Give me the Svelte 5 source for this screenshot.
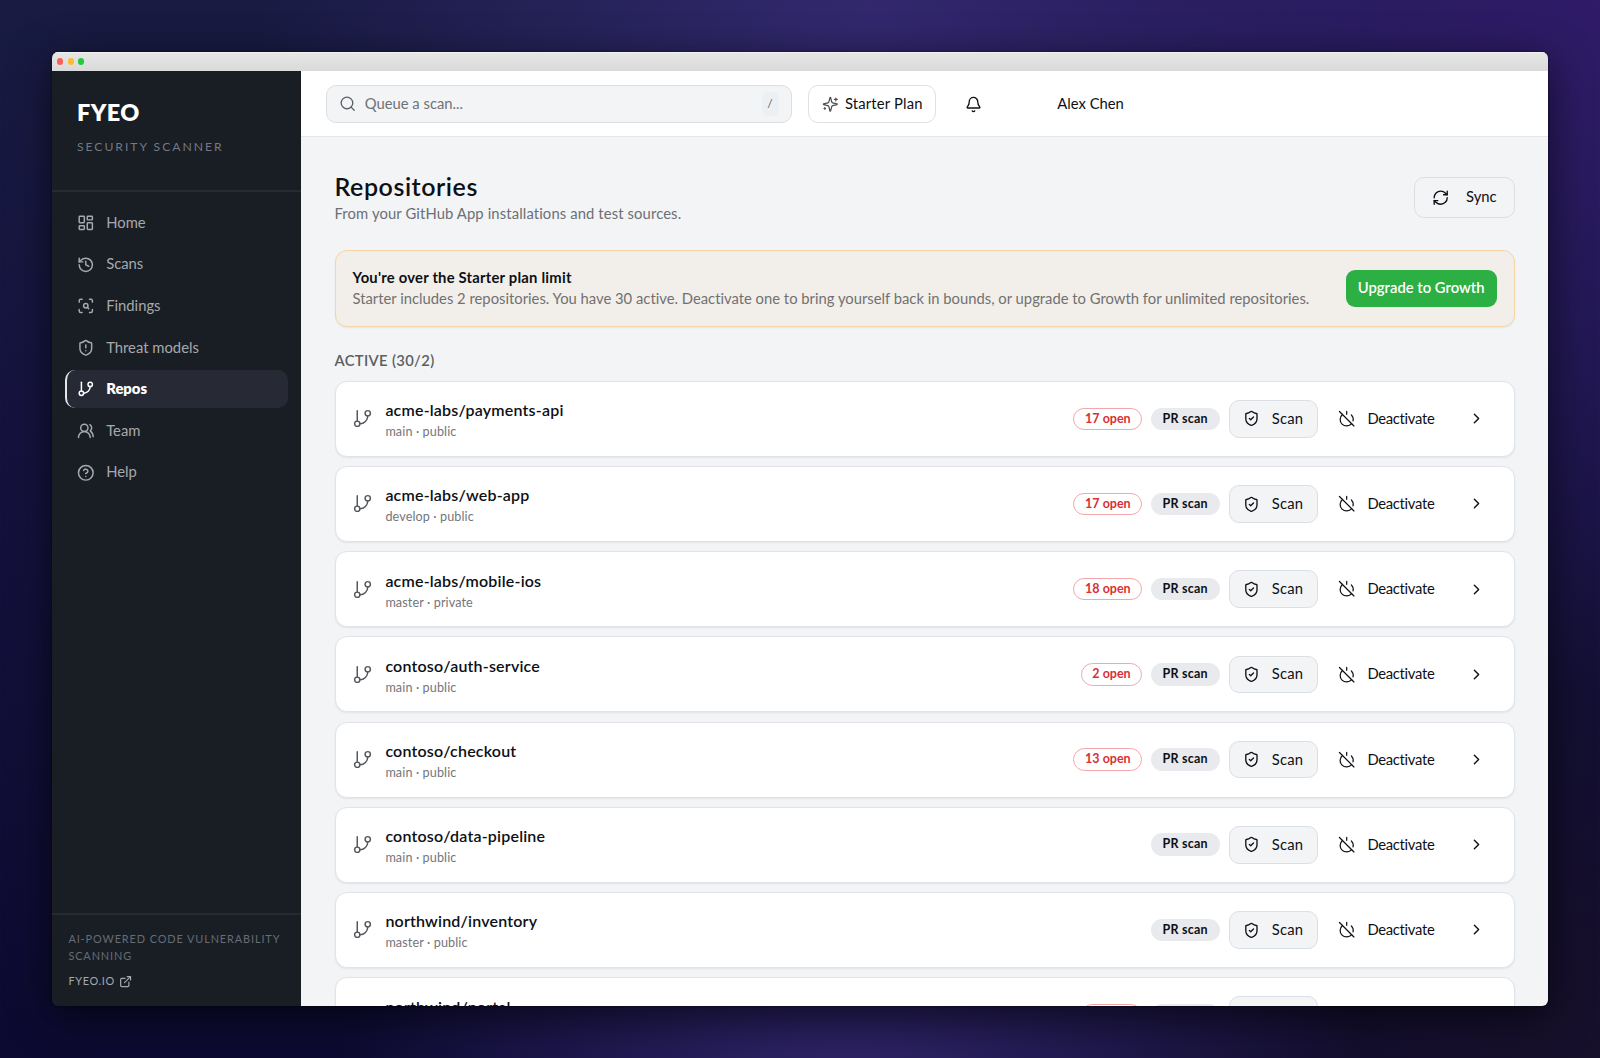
<script lang="ts">
  type Repo = {
    name: string;
    branch: string;
    visibility: string;
    open: number;
  };

  const navItems = [
    { label: 'Home', icon: 'dashboard' },
    { label: 'Scans', icon: 'history' },
    { label: 'Findings', icon: 'scanSearch' },
    { label: 'Threat models', icon: 'shieldAlert' },
    { label: 'Repos', icon: 'branch' },
    { label: 'Team', icon: 'users' },
    { label: 'Help', icon: 'help' },
  ];

  const repos: Repo[] = [
    { name: 'acme-labs/payments-api', branch: 'main', visibility: 'public', open: 17 },
    { name: 'acme-labs/web-app', branch: 'develop', visibility: 'public', open: 17 },
    { name: 'acme-labs/mobile-ios', branch: 'master', visibility: 'private', open: 18 },
    { name: 'contoso/auth-service', branch: 'main', visibility: 'public', open: 2 },
    { name: 'contoso/checkout', branch: 'main', visibility: 'public', open: 13 },
    { name: 'contoso/data-pipeline', branch: 'main', visibility: 'public', open: 0 },
    { name: 'northwind/inventory', branch: 'master', visibility: 'public', open: 0 },
    { name: 'northwind/portal', branch: 'main', visibility: 'public', open: 5 },
  ];

  const icons: Record<string, string[]> = {
    dashboard: ['M4 3h5a1 1 0 0 1 1 1v7a1 1 0 0 1-1 1H4a1 1 0 0 1-1-1V4a1 1 0 0 1 1-1z', 'M15 3h5a1 1 0 0 1 1 1v3a1 1 0 0 1-1 1h-5a1 1 0 0 1-1-1V4a1 1 0 0 1 1-1z', 'M15 12h5a1 1 0 0 1 1 1v7a1 1 0 0 1-1 1h-5a1 1 0 0 1-1-1v-7a1 1 0 0 1 1-1z', 'M4 16h5a1 1 0 0 1 1 1v3a1 1 0 0 1-1 1H4a1 1 0 0 1-1-1v-3a1 1 0 0 1 1-1z'],
    history: ['M3 12a9 9 0 1 0 9-9 9.75 9.75 0 0 0-6.74 2.74L3 8', 'M3 3v5h5', 'M12 7v5l4 2'],
    scanSearch: ['M3 7V5a2 2 0 0 1 2-2h2', 'M17 3h2a2 2 0 0 1 2 2v2', 'M21 17v2a2 2 0 0 1-2 2h-2', 'M7 21H5a2 2 0 0 1-2-2v-2', 'M15 12a3 3 0 1 1-6 0 3 3 0 0 1 6 0z', 'm16 16-1.9-1.9'],
    shieldAlert: ['M20 13c0 5-3.5 7.5-7.66 8.95a1 1 0 0 1-.67-.01C7.5 20.5 4 18 4 13V6a1 1 0 0 1 1-1c2 0 4.5-1.2 6.24-2.72a1.17 1.17 0 0 1 1.52 0C14.51 3.81 17 5 19 5a1 1 0 0 1 1 1z', 'M12 8v4', 'M12 16h.01'],
    shieldCheck: ['M20 13c0 5-3.5 7.5-7.66 8.95a1 1 0 0 1-.67-.01C7.5 20.5 4 18 4 13V6a1 1 0 0 1 1-1c2 0 4.5-1.2 6.24-2.72a1.17 1.17 0 0 1 1.52 0C14.51 3.81 17 5 19 5a1 1 0 0 1 1 1z', 'm9 12 2 2 4-4'],
    branch: ['M6 3v12', 'M21 6a3 3 0 1 1-6 0 3 3 0 0 1 6 0z', 'M9 18a3 3 0 1 1-6 0 3 3 0 0 1 6 0z', 'M18 9a9 9 0 0 1-9 9'],
    users: ['M18 21a8 8 0 0 0-16 0', 'M15 8a5 5 0 1 1-10 0 5 5 0 0 1 10 0z', 'M22 20c0-3.37-2-6.5-4-8a5 5 0 0 0-.45-8.3'],
    help: ['M22 12a10 10 0 1 1-20 0 10 10 0 0 1 20 0z', 'M9.09 9a3 3 0 0 1 5.83 1c0 2-3 3-3 3', 'M12 17h.01'],
    external: ['M15 3h6v6', 'M10 14 21 3', 'M18 13v6a2 2 0 0 1-2 2H5a2 2 0 0 1-2-2V8a2 2 0 0 1 2-2h6'],
    search: ['M19 11a8 8 0 1 1-16 0 8 8 0 0 1 16 0z', 'm21 21-4.3-4.3'],
    sparkles: ['M9.937 15.5A2 2 0 0 0 8.5 14.063l-6.135-1.582a.5.5 0 0 1 0-.962L8.5 9.936A2 2 0 0 0 9.937 8.5l1.582-6.135a.5.5 0 0 1 .963 0L14.063 8.5A2 2 0 0 0 15.5 9.937l6.135 1.581a.5.5 0 0 1 0 .964L15.5 14.063a2 2 0 0 0-1.437 1.437l-1.582 6.135a.5.5 0 0 1-.963 0z', 'M20 3v4', 'M22 5h-4', 'M4 17v2', 'M5 18H3'],
    bell: ['M10.268 21a2 2 0 0 0 3.464 0', 'M3.262 15.326A1 1 0 0 0 4 17h16a1 1 0 0 0 .74-1.673C19.41 13.956 18 12.499 18 8A6 6 0 0 0 6 8c0 4.499-1.411 5.956-2.738 7.326'],
    refresh: ['M3 12a9 9 0 0 1 9-9 9.75 9.75 0 0 1 6.74 2.74L21 8', 'M21 3v5h-5', 'M21 12a9 9 0 0 1-9 9 9.75 9.75 0 0 1-6.74-2.74L3 16', 'M8 16H3v5'],
    powerOff: ['M18.36 6.64A9 9 0 0 1 20.77 15', 'M6.16 6.16a9 9 0 1 0 12.68 12.68', 'M12 2v4', 'm2 2 20 20'],
    chevron: ['m9 18 6-6-6-6'],
  };

  let active = 'Repos';
</script>

{#snippet icon(name: string, size: number, stroke: number)}
  <svg
    class="icon"
    width={size}
    height={size}
    viewBox="0 0 24 24"
    fill="none"
    stroke="currentColor"
    stroke-width={stroke}
    stroke-linecap="round"
    stroke-linejoin="round"
    aria-hidden="true"
  >
    {#each icons[name] as d}
      <path {d} />
    {/each}
  </svg>
{/snippet}

<div class="desktop">
  <div class="window">
    <div class="titlebar">
      <span class="light red"></span>
      <span class="light yellow"></span>
      <span class="light green"></span>
    </div>

    <div class="shell">
      <aside class="sidebar">
        <div class="brand">
          <div class="brand-name">FYEO</div>
          <div class="brand-sub">SECURITY SCANNER</div>
        </div>

        <nav class="nav">
          {#each navItems as item}
            <a class="nav-item" class:active={item.label === active} href="#{item.icon}">
              {@render icon(item.icon, 17.6, 2)}
              <span class="label">{item.label}</span>
            </a>
          {/each}
        </nav>

        <div class="sidebar-footer">
          <p>AI-POWERED CODE VULNERABILITY SCANNING</p>
          <a href="#site">
            <span>FYEO.IO</span>
            {@render icon('external', 13.2, 2.2)}
          </a>
        </div>
      </aside>

      <div class="main">
        <header class="topbar">
          <div class="search">
            {@render icon('search', 17.4, 1.8)}
            <span class="placeholder">Queue a scan...</span>
            <kbd>/</kbd>
          </div>
          <button class="plan">
            {@render icon('sparkles', 16.6, 1.8)}
            <span class="label">Starter Plan</span>
          </button>
          <button class="bell" aria-label="Notifications">
            {@render icon('bell', 17, 1.9)}
          </button>
          <span class="user label">Alex Chen</span>
        </header>

        <main class="content">
          <div class="page-head">
            <div>
              <h1>Repositories</h1>
              <p class="lead">From your GitHub App installations and test sources.</p>
            </div>
            <button class="sync">
              {@render icon('refresh', 17.4, 1.9)}
              <span class="label">Sync</span>
            </button>
          </div>

          <section class="notice">
            <div class="notice-body">
              <h2>You're over the Starter plan limit</h2>
              <p class="notice-text">
                Starter includes 2 repositories. You have 30 active. Deactivate one to bring yourself back in bounds, or upgrade to Growth for unlimited repositories.
              </p>
            </div>
            <button class="upgrade">Upgrade to Growth</button>
          </section>

          <h3 class="section-title">ACTIVE (30/2)</h3>

          <div class="repo-list">
            {#each repos as repo}
              <article class="repo">
                <span class="repo-icon">{@render icon('branch', 21, 1.7)}</span>
                <div class="repo-info">
                  <div class="repo-name">{repo.name}</div>
                  <div class="repo-meta">{repo.branch} · {repo.visibility}</div>
                </div>
                {#if repo.open > 0}
                  <span class="pill open">{repo.open} open</span>
                {/if}
                <span class="pill pr">PR scan</span>
                <button class="scan">
                  {@render icon('shieldCheck', 16.8, 1.9)}
                  <span class="label">Scan</span>
                </button>
                <button class="deactivate">
                  {@render icon('powerOff', 17.4, 1.7)}
                  <span class="label">Deactivate</span>
                </button>
                <button class="more" aria-label="Open repository">
                  {@render icon('chevron', 17, 2)}
                </button>
              </article>
            {/each}
          </div>
        </main>
      </div>
    </div>
  </div>
</div>

<style>
  :global(body) {
    overflow: hidden;
  }

  .desktop {
    box-sizing: border-box;
    width: 1600px;
    height: 1058px;
    padding: 52px;
    overflow: hidden;
    font-family: Lato, 'Open Sans', sans-serif;
    font-size: 14.8px;
    font-variant-ligatures: none;
    color: #0d1015;
    background:
      radial-gradient(ellipse 520px 280px at 53% 103%, #30256a 0%, rgba(48, 37, 106, 0) 100%),
      radial-gradient(ellipse 800px 700px at 100% 0%, #2f1b69 0%, rgba(47, 27, 105, 0) 100%),
      radial-gradient(ellipse 620px 420px at 55% 0%, #33296f 0%, rgba(51, 41, 111, 0) 100%),
      radial-gradient(ellipse 700px 600px at 100% 100%, #17102b 0%, rgba(23, 16, 43, 0) 100%),
      linear-gradient(180deg, #181b42 0%, #15133e 40%, #0c0a30 100%);
  }

  button {
    font: inherit;
    color: inherit;
    background: none;
    border: 0;
    padding: 0;
    margin: 0;
  }

  a {
    color: inherit;
    text-decoration: none;
  }

  h1,
  h2,
  h3,
  p {
    margin: 0;
  }

  .icon {
    display: block;
    flex: none;
  }

  .label {
    margin-bottom: 2px;
  }

  .window {
    display: flex;
    flex-direction: column;
    height: 100%;
    border-radius: 6px;
    overflow: hidden;
    box-shadow:
      0 0 2px rgba(0, 0, 0, 0.8),
      0 10px 42px rgba(0, 0, 0, 0.6);
  }

  .titlebar {
    display: flex;
    align-items: center;
    gap: 4.2px;
    height: 19px;
    flex: none;
    box-sizing: border-box;
    padding-left: 5.2px;
    background: linear-gradient(#e6e6e5, #dadada);
    box-shadow: inset 0 1px 0 #f2f2f2;
  }

  .light {
    width: 6.3px;
    height: 6.3px;
    border-radius: 50%;
  }

  .red {
    background: #fe5f57;
  }

  .yellow {
    background: #febb2e;
  }

  .green {
    background: #27c840;
  }

  .shell {
    display: flex;
    flex: 1;
    min-height: 0;
  }

  .sidebar {
    display: flex;
    flex-direction: column;
    width: 249px;
    flex: none;
    background: #191e24;
    color: #a6a9ae;
  }

  .brand {
    box-sizing: border-box;
    height: 121px;
    padding: 27px 25px 0;
    border-bottom: 2px solid #252a33;
  }

  .brand-name {
    font-size: 23.4px;
    font-weight: 800;
    line-height: 29px;
    letter-spacing: 0.4px;
    color: #fff;
  }

  .brand-sub {
    margin-top: 12px;
    font-size: 12.2px;
    line-height: 16px;
    letter-spacing: 1.95px;
    color: #747882;
  }

  .nav {
    display: flex;
    flex-direction: column;
    gap: 4.1px;
    padding: 12px 13.2px 0 12.5px;
  }

  .nav-item {
    display: flex;
    align-items: center;
    gap: 11.9px;
    box-sizing: border-box;
    height: 37.5px;
    padding-left: 10.2px;
    border-left: 2px solid transparent;
    border-radius: 10px;
  }

  .nav-item.active {
    color: #fff;
    font-weight: 800;
    background: #272a35;
    border-left-color: #e4e5e8;
  }

  .sidebar-footer {
    box-sizing: border-box;
    height: 93px;
    margin-top: auto;
    padding: 16px 16.4px 0;
    border-top: 2px solid #252a33;
    font-size: 10.9px;
    line-height: 16.7px;
    letter-spacing: 0.9px;
    color: #676c75;
  }

  .sidebar-footer p {
    margin-right: -6px;
  }

  .sidebar-footer a {
    display: flex;
    align-items: center;
    gap: 4.5px;
    margin-top: 8.5px;
    color: #a6a9ae;
    letter-spacing: 0.65px;
  }

  .main {
    flex: 1;
    min-width: 0;
    display: flex;
    flex-direction: column;
    background: #f2f4f6;
  }

  .topbar {
    display: flex;
    align-items: center;
    box-sizing: border-box;
    height: 66px;
    flex: none;
    padding: 1px 0 0 25px;
    background: #fff;
    border-bottom: 1.5px solid #e4e6e9;
  }

  .search {
    display: flex;
    align-items: center;
    box-sizing: border-box;
    width: 465.5px;
    height: 37.5px;
    padding: 0 12px;
    border: 1px solid #dcdfe3;
    border-radius: 10px;
    background: #f2f4f6;
    color: #5c6066;
  }

  .placeholder {
    flex: 1;
    margin: 0 0 2px 8.3px;
    color: #6f7276;
  }

  kbd {
    width: 17px;
    height: 24px;
    border-radius: 5px;
    background: #edf0f2;
    font: 12px/23px Lato, sans-serif;
    text-align: center;
  }

  .plan {
    display: flex;
    align-items: center;
    gap: 6px;
    box-sizing: border-box;
    width: 128px;
    height: 37.5px;
    margin-left: 16.8px;
    padding-left: 13px;
    border: 1px solid #dfe1e4;
    border-radius: 10px;
    letter-spacing: 0.18px;
  }

  .plan .icon {
    color: #4a4d52;
  }

  .bell {
    margin-left: 29px;
  }

  .user {
    margin-left: 75px;
  }

  .content {
    display: flex;
    flex-direction: column;
    padding: 32px 33.4px 0 33.5px;
  }

  .page-head {
    display: flex;
    justify-content: space-between;
    height: 81px;
    flex: none;
  }

  h1 {
    font-size: 25px;
    font-weight: 600;
    line-height: 34px;
    letter-spacing: 0.55px;
  }

  .lead {
    line-height: 20px;
    letter-spacing: 0.12px;
    color: #6c6f74;
  }

  .sync {
    display: flex;
    align-items: center;
    gap: 17px;
    box-sizing: border-box;
    width: 100.5px;
    height: 41.5px;
    margin-top: 7.6px;
    padding-left: 16.5px;
    border: 1px solid #dcdee2;
    border-radius: 10px;
  }

  .notice {
    display: flex;
    align-items: center;
    justify-content: space-between;
    box-sizing: border-box;
    height: 77px;
    flex: none;
    padding: 0 17px;
    border: 1px solid #f7d4a3;
    border-radius: 12px;
    background: #f2efea;
    box-shadow: 0 1px 2px rgba(20, 30, 50, 0.06);
  }

  .notice-body {
    margin-bottom: 2px;
  }

  h2 {
    font-size: 14.8px;
    font-weight: 700;
    line-height: 21px;
    letter-spacing: 0.22px;
  }

  .notice-text {
    line-height: 21px;
    color: #717171;
    white-space: nowrap;
  }

  .upgrade {
    width: 151px;
    height: 37px;
    padding-bottom: 3px;
    border-radius: 9px;
    background: #2db043;
    color: #fff;
    font-weight: 600;
  }

  .section-title {
    margin-top: 23px;
    font-size: 14.8px;
    font-weight: 600;
    line-height: 21px;
    letter-spacing: 0.33px;
    color: #5b5e63;
  }

  .repo-list {
    display: flex;
    flex-direction: column;
    gap: 9.2px;
    margin-top: 9.8px;
  }

  .repo {
    display: flex;
    align-items: center;
    box-sizing: border-box;
    height: 76px;
    padding: 0 16.5px;
    border: 1px solid #e0e3e7;
    border-radius: 12px;
    background: #fff;
    box-shadow: 0 1px 2px rgba(20, 30, 50, 0.07);
  }

  .repo-icon {
    color: #55585d;
  }

  .repo-info {
    flex: 1;
    margin: 2px 0 0 12.4px;
  }

  .repo-name {
    font-size: 16px;
    font-weight: 600;
    line-height: 23px;
    letter-spacing: 0.19px;
  }

  .repo-meta {
    margin-top: 2px;
    font-size: 12.6px;
    line-height: 18px;
    letter-spacing: 0.12px;
    color: #73767b;
  }

  .pill {
    box-sizing: border-box;
    height: 22.5px;
    margin-right: 8.6px;
    padding: 0 10.7px;
    border: 1px solid transparent;
    border-radius: 12px;
    font-size: 12.5px;
    font-weight: 700;
    line-height: 20.5px;
  }

  .open {
    color: #d92f35;
    border-color: #f3a7aa;
  }

  .pr {
    width: 69.5px;
    background: #e8eaed;
    letter-spacing: 0.2px;
  }

  .scan {
    display: flex;
    align-items: center;
    gap: 12.5px;
    box-sizing: border-box;
    width: 88.5px;
    height: 37.7px;
    padding-left: 12.5px;
    border: 1px solid #dcdfe3;
    border-radius: 10px;
    background: #f2f4f6;
    letter-spacing: 0.15px;
  }

  .deactivate {
    display: flex;
    align-items: center;
    gap: 12.5px;
    width: 97px;
    margin-left: 20px;
    letter-spacing: -0.3px;
  }

  .more {
    margin-left: 33px;
    margin-right: 12.6px;
  }
</style>
